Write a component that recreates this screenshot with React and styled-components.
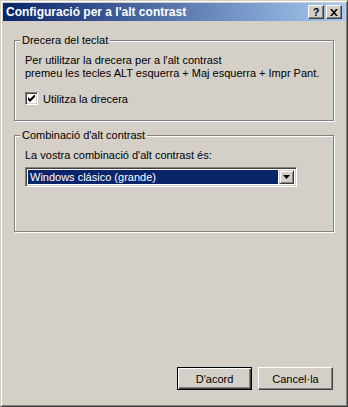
import styled, { createGlobalStyle } from 'styled-components';

const GlobalStyle = createGlobalStyle`
  html, body {
    margin: 0;
    padding: 0;
    background: #d4d0c8;
  }
  body {
    font-family: "Liberation Sans", Arial, sans-serif;
    font-size: 11px;
    color: #000;
  }
`;

const Window = styled.div`
  box-sizing: border-box;
  width: 348px;
  height: 407px;
  display: flex;
  flex-direction: column;
  background: #d4d0c8;
  border: 1px solid;
  border-color: #d4d0c8 #404040 #404040 #d4d0c8;
  box-shadow: inset 1px 1px 0 #fff, inset -1px -1px 0 #808080;
  padding: 2px;
`;

const TitleBar = styled.div`
  height: 18px;
  display: flex;
  align-items: center;
  padding: 0 3px 0 3px;
  background: linear-gradient(to right, #0a246a, #a6caf0);
  color: #fff;
  font-weight: bold;
  font-size: 12px;
`;

const Title = styled.div`
  flex: 1;
  white-space: nowrap;
`;

const CaptionButton = styled.button`
  box-sizing: border-box;
  width: 16px;
  height: 14px;
  margin-left: ${(p) => (p.$gap ? '2px' : '0')};
  padding: 0;
  display: flex;
  align-items: center;
  justify-content: center;
  background: #d4d0c8;
  border: 1px solid;
  border-color: #fff #404040 #404040 #fff;
  box-shadow: inset -1px -1px 0 #808080;
  font-family: "Liberation Sans", Arial, sans-serif;
  font-weight: bold;
  font-size: 11px;
  color: #000;
  line-height: 1;
`;

const Body = styled.div`
  flex: 1;
  display: flex;
  flex-direction: column;
  padding: 19px 11px 14px 11px;
`;

const Group = styled.div`
  position: relative;
  box-sizing: border-box;
  height: ${(p) => p.$h}px;
  margin-bottom: ${(p) => p.$mb || 0}px;
  border: 1px solid #808080;
  box-shadow: inset 1px 1px 0 #fff, 1px 1px 0 #fff;
  padding: 13px 10px 0 10px;
  display: flex;
  flex-direction: column;
`;

const Legend = styled.span`
  position: absolute;
  top: -7px;
  left: 5px;
  padding: 0 2px;
  background: #d4d0c8;
  line-height: 13px;
`;

const Paragraph = styled.p`
  margin: 0;
  line-height: 13px;
`;

const CheckRow = styled.label`
  display: flex;
  align-items: center;
  gap: 5px;
  margin-top: 12px;
`;

const CheckBox = styled.span`
  box-sizing: border-box;
  width: 13px;
  height: 13px;
  background: #fff;
  border: 1px solid;
  border-color: #808080 #fff #fff #808080;
  box-shadow: inset 1px 1px 0 #404040, inset -1px -1px 0 #d4d0c8;
  display: flex;
  align-items: center;
  justify-content: center;
`;

const Select = styled.div`
  box-sizing: border-box;
  width: 272px;
  height: 20px;
  margin-top: 5px;
  display: flex;
  border: 1px solid;
  border-color: #808080 #fff #fff #808080;
  box-shadow: inset 1px 1px 0 #404040, inset -1px -1px 0 #d4d0c8;
  padding: 2px;
  background: #fff;
`;

const SelectValue = styled.div`
  flex: 1;
  background: #0a246a;
  color: #fff;
  padding-left: 2px;
  line-height: 14px;
`;

const DropButton = styled.div`
  box-sizing: border-box;
  width: 15px;
  height: 14px;
  margin-left: 1px;
  background: #d4d0c8;
  border: 1px solid;
  border-color: #d4d0c8 #404040 #404040 #d4d0c8;
  box-shadow: inset 1px 1px 0 #fff, inset -1px -1px 0 #808080;
  display: flex;
  align-items: center;
  justify-content: center;
`;

const Spacer = styled.div`
  flex: 1;
`;

const ButtonRow = styled.div`
  display: flex;
  justify-content: flex-end;
  gap: 6px;
  padding-right: 1px;
`;

const DialogButton = styled.button`
  box-sizing: border-box;
  width: 75px;
  height: 23px;
  padding: 0;
  background: #d4d0c8;
  font-family: "Liberation Sans", Arial, sans-serif;
  font-size: 11px;
  color: #000;
  border: 1px solid;
  border-color: ${(p) => (p.$default ? '#000' : '#fff #404040 #404040 #fff')};
  box-shadow: ${(p) =>
    p.$default
      ? 'inset 1px 1px 0 #fff, inset -1px -1px 0 #404040, inset -2px -2px 0 #808080'
      : 'inset -1px -1px 0 #808080'};
`;

export default function App() {
  return (
    <>
      <GlobalStyle />
      <Window>
        <TitleBar>
          <Title>Configuració per a l'alt contrast</Title>
          <CaptionButton>?</CaptionButton>
          <CaptionButton $gap>
            <svg width="8" height="7" viewBox="0 0 8 7">
              <path d="M0 0h2l2 2.2L6 0h2L5 3.5 8 7H6L4 4.8 2 7H0l3-3.5z" fill="#000" />
            </svg>
          </CaptionButton>
        </TitleBar>
        <Body>
          <Group $h={81} $mb={14}>
            <Legend>Drecera del teclat</Legend>
            <Paragraph>Per utilitzar la drecera per a l'alt contrast</Paragraph>
            <Paragraph>premeu les tecles ALT esquerra + Maj esquerra + Impr Pant.</Paragraph>
            <CheckRow>
              <CheckBox>
                <svg width="7" height="7" viewBox="0 0 7 7">
                  <path d="M0 2v3l2 2 5-5V-1L2 4z" fill="#000" />
                </svg>
              </CheckBox>
              Utilitza la drecera
            </CheckRow>
          </Group>
          <Group $h={97}>
            <Legend>Combinació d'alt contrast</Legend>
            <Paragraph>La vostra combinació d'alt contrast és:</Paragraph>
            <Select>
              <SelectValue>Windows clásico (grande)</SelectValue>
              <DropButton>
                <svg width="7" height="4" viewBox="0 0 7 4">
                  <path d="M0 0h7L3.5 4z" fill="#000" />
                </svg>
              </DropButton>
            </Select>
          </Group>
          <Spacer />
          <ButtonRow>
            <DialogButton $default>D'acord</DialogButton>
            <DialogButton>Cancel·la</DialogButton>
          </ButtonRow>
        </Body>
      </Window>
    </>
  );
}
